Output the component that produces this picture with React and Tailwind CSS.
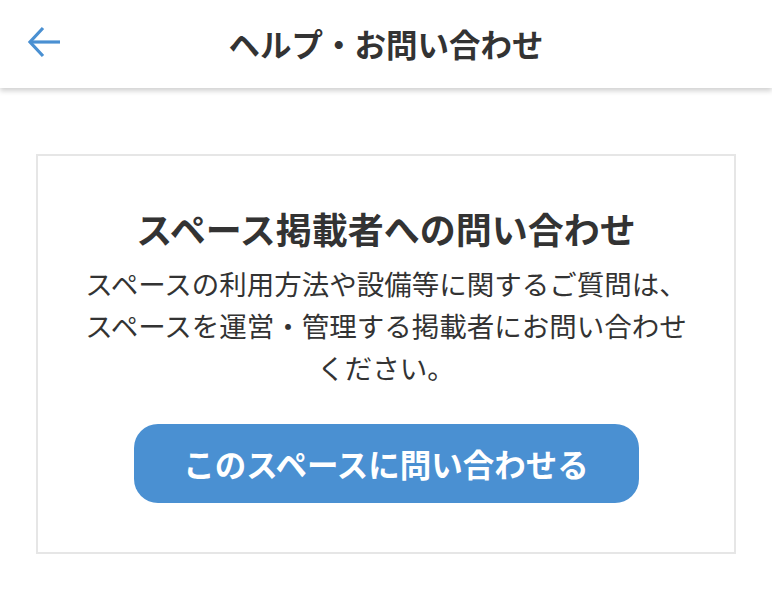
import React from 'react';

const font = { fontFamily: '"Noto Sans CJK JP", "Noto Sans", sans-serif' };

export default function App() {
  return (
    <div className="min-h-[598px] w-full bg-white text-[#333]" style={font}>
      {/* Header */}
      <header className="relative flex h-[88px] items-center justify-center bg-white shadow-[0_3px_5px_rgba(0,0,0,0.18)]">
        <button className="absolute left-[26px] top-[24px] flex h-[36px] w-[36px] items-center justify-center">
          <svg viewBox="0 0 36 36" className="h-[36px] w-[36px]" fill="none" stroke="#4a90d2" strokeWidth="3.2">
            <path d="M34 18H5" />
            <path d="M17 4L4 18l13 14" />
          </svg>
        </button>
        <h1 className="text-[31.5px] font-bold">ヘルプ・お問い合わせ</h1>
      </header>

      {/* Card */}
      <div className="px-[36px] pt-[66px]">
        <div className="flex flex-col items-center border-2 border-[#e6e6e6] pt-[50px] pb-[49px]">
          <h2 className="text-[36px] font-bold leading-[44px]">スペース掲載者への問い合わせ</h2>
          <p className="mt-[12px] text-center text-[27.5px] leading-[42px]">
            スペースの利用方法や設備等に関するご質問は、<br />
            スペースを運営・管理する掲載者にお問い合わせ<br />
            ください。
          </p>
          <button className="mt-[36px] flex h-[79px] w-[505px] items-center justify-center rounded-[24px] bg-[#4a90d2] text-[31.5px] font-bold text-white">
            このスペースに問い合わせる
          </button>
        </div>
      </div>
    </div>
  );
}
